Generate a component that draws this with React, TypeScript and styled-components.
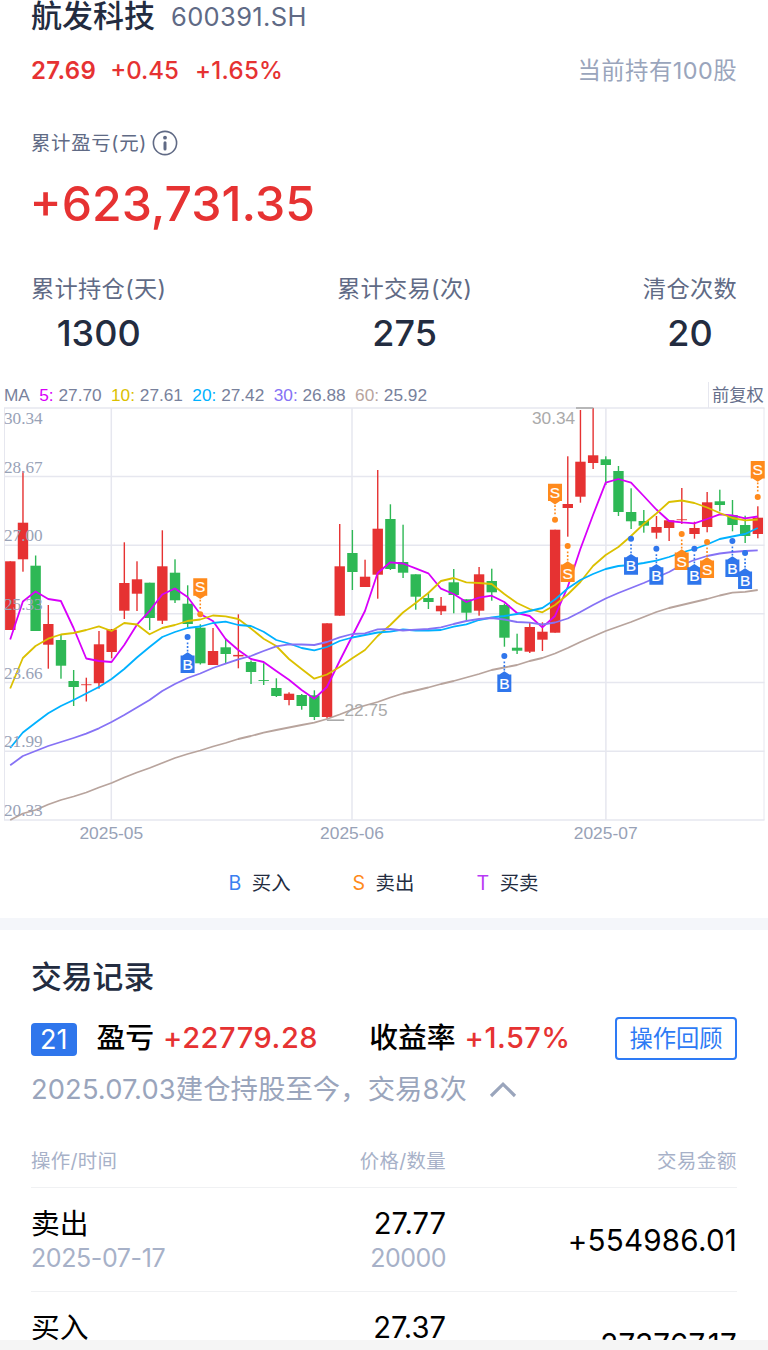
import React from "react";
import styled, { createGlobalStyle } from "styled-components";

const GlobalStyle = createGlobalStyle`
  * { box-sizing: border-box; }
  body {
    margin: 0;
    background: #fff;
    font-family: Inter, "Noto Sans CJK SC", sans-serif;
  }
`;

const RED = "#e63232";
const GREEN = "#2eb855";
const BLUE = "#2f76ec";
const ORANGE = "#ff8a1c";

const Page = styled.main`
  display: flex;
  flex-direction: column;
  width: 768px;
  height: 1350px;
  overflow: hidden;
  background: #fff;
`;

const Text = styled.span<{ $size: number; $color?: string; $weight?: number; $track?: number; $line?: number }>`
  font-size: ${(p) => p.$size}px;
  line-height: ${(p) => p.$line ?? 32}px;
  font-weight: ${(p) => p.$weight ?? 400};
  color: ${(p) => p.$color ?? "#000"};
  letter-spacing: ${(p) => p.$track ?? 0}px;
  white-space: nowrap;
`;

const Summary = styled.header`
  display: flex;
  flex-direction: column;
  height: 382px;
  padding: 0 31px;
  flex: none;
`;

const TitleRow = styled.div`
  display: flex;
  align-items: center;
  gap: 16px;
  height: 32px;
`;

const Code = styled(Text)`
  padding-top: 2px;
`;

const QuoteRow = styled.div`
  display: flex;
  align-items: center;
  height: 32px;
  margin-top: 23px;
`;

const Quote = styled.div`
  display: flex;
  flex: 1;
  gap: 14px;
`;

const Percent = styled(Text)`
  margin-left: 2px;
`;

const ProfitLabel = styled.div`
  display: flex;
  align-items: center;
  gap: 5px;
  height: 32px;
  margin-top: 40px;
`;

const Profit = styled.div`
  display: flex;
  align-items: center;
  height: 60px;
  margin: 15px 0 0 -1.5px;
`;

const Stats = styled.div`
  display: flex;
  justify-content: space-between;
  margin-top: 39px;
`;

const Stat = styled.div`
  display: flex;
  flex-direction: column;
  align-items: center;
`;

const ChartHead = styled.div`
  display: flex;
  height: 26px;
  flex: none;
  padding: 0 4px;
  justify-content: space-between;
  font-family: "Liberation Sans", "Noto Sans CJK SC", sans-serif;
  font-size: 17.25px;
  line-height: 27px;
  color: #78819c;
`;

const Averages = styled.div`
  display: flex;
  gap: 9.4px;
  white-space: pre;
`;

const AverageName = styled.span<{ $color: string }>`
  color: ${(p) => p.$color};
`;

const Adjust = styled.div`
  width: 56px;
  border-left: 1.5px solid #e6e7ef;
  padding-left: 3px;
  color: #66708c;
  white-space: nowrap;
`;

const Chart = styled.svg`
  display: block;
  flex: none;
  width: 768px;
  height: 442px;
`;

const Legend = styled.div`
  display: flex;
  flex: none;
  height: 68px;
  padding: 16.5px 0 0 228.5px;
  gap: 62px;
`;

const LegendItem = styled.div`
  display: flex;
  gap: 10.5px;
  width: 62px;
`;

const Divider = styled.div`
  height: 12px;
  flex: none;
  background: #f4f6fa;
`;

const Records = styled.section`
  display: flex;
  flex-direction: column;
  height: 410px;
  flex: none;
  overflow: hidden;
  padding: 0 31px;
`;

const Heading = styled.h2`
  display: flex;
  margin: 31px 0 0;
  height: 32px;
`;

const ResultRow = styled.div`
  display: flex;
  align-items: center;
  height: 43px;
  margin-top: 24px;
`;

const Badge = styled.div`
  display: flex;
  align-items: center;
  justify-content: center;
  width: 45.5px;
  height: 33px;
  margin-top: 2px;
  border-radius: 4px;
  background: ${BLUE};
`;

const Pair = styled.div<{ $left: number }>`
  display: flex;
  align-items: center;
  gap: 9px;
  margin-left: ${(p) => p.$left}px;
  padding-bottom: 2px;
`;

const ReviewButton = styled.button`
  display: flex;
  align-items: center;
  justify-content: center;
  width: 122px;
  height: 43px;
  margin-left: auto;
  padding: 1px 0 0;
  border: 2px solid #2e7bf5;
  border-radius: 4px;
  background: #fff;
  font-family: inherit;
`;

const NoteRow = styled.div`
  display: flex;
  align-items: center;
  gap: 22px;
  height: 32px;
  margin-top: 14px;
`;

const Columns = styled.div<{ $height: number; $top?: number }>`
  display: grid;
  grid-template-columns: 215px 200px 1fr;
  align-items: center;
  flex: none;
  height: ${(p) => p.$height}px;
  padding-top: ${(p) => p.$top ?? 0}px;
  border-bottom: 1px solid #f0f1f3;
`;

const Cell = styled.div<{ $end?: boolean }>`
  display: flex;
  flex-direction: column;
  align-items: ${(p) => (p.$end ? "flex-end" : "flex-start")};
`;

const BottomEdge = styled.div`
  height: 10px;
  flex: none;
  background: #f5f5f5;
`;

// Each candle: direction, body top, body bottom, wick top, wick bottom.
type Candle = ["r" | "g", number, number, number, number];
const candles: Candle[] = [
  ["r", 561.3, 630, 561.3, 630], ["r", 522.7, 559.3, 471, 571.7], ["g", 565.7, 631, 555.5, 631],
  ["r", 624, 644.7, 605, 668.7], ["g", 640, 665.7, 635, 678.7], ["g", 681, 687, 670, 706],
  ["r", 684.3, 685.2, 677.7, 701.5], ["r", 644.3, 683.2, 631, 688.7], ["r", 629.5, 652, 629, 658.3],
  ["r", 583, 610.7, 542.3, 619], ["r", 579.3, 593.7, 561.3, 611], ["g", 582.7, 618, 582.7, 630],
  ["r", 566.3, 620.7, 530.3, 624], ["g", 572.7, 600.3, 559.3, 603], ["g", 603.7, 624, 585.3, 627],
  ["g", 627.7, 663.3, 624.3, 664.5], ["r", 651, 665, 628, 665], ["g", 647.3, 654, 638.7, 663.3],
  ["r", 654.9, 656.4, 614.3, 668.3], ["g", 662, 672, 660.5, 684], ["g", 680, 680.9, 663.3, 685],
  ["g", 688, 696, 678.3, 697], ["r", 693.7, 700, 692.3, 705.3], ["g", 695, 706, 694, 709.7],
  ["g", 695.3, 717, 690.3, 720], ["r", 623.3, 717, 623.3, 718.7], ["r", 566.3, 615.7, 524, 615.7],
  ["g", 553, 572, 530, 590], ["r", 576.7, 587, 559.7, 587], ["r", 528.7, 574.7, 470, 598.7],
  ["g", 519, 569, 504.3, 570], ["g", 562, 572.7, 524.7, 578], ["g", 574.3, 596.7, 574.3, 609.7],
  ["g", 598, 602, 592.3, 609], ["r", 605.7, 611.3, 597, 615], ["g", 582.3, 595, 569, 613.3],
  ["g", 599.3, 612.7, 599.3, 620.7], ["r", 574.3, 610.7, 567, 615.7], ["g", 581, 592.3, 568.7, 600.7],
  ["g", 605, 637.7, 603.5, 646.7], ["g", 647.7, 650.7, 633.7, 654], ["r", 627, 651.7, 623, 653],
  ["r", 631.7, 639.7, 622.3, 651], ["r", 529.7, 632.7, 529.7, 632.7], ["r", 504, 508, 456.3, 536.7],
  ["r", 461.7, 496.7, 410, 502.7], ["r", 455.3, 463, 408, 469], ["g", 459.3, 465, 456.3, 485],
  ["g", 471, 512, 466, 516], ["g", 512, 521.3, 488.3, 529], ["g", 521, 525.7, 510, 532.7],
  ["r", 527, 532.7, 516, 538.7], ["r", 520.3, 528, 520.3, 541], ["r", 519.3, 520.2, 488, 524],
  ["r", 528, 534, 521.7, 538.7], ["r", 502.3, 527, 492, 532.3], ["g", 501.3, 505, 489.7, 511.3],
  ["g", 515, 525, 500, 531.3], ["g", 525, 536, 515.7, 543], ["r", 517.7, 534, 506.3, 538.3],
];

const averages = [
  {
    name: "60:", value: "25.92", color: "#b8a49d", width: 1.8,
    ys: [820, 813.5, 810, 804.5, 800, 796.5, 792.5, 787.5, 783, 777.5, 772.5, 768, 763, 758, 754, 750.5, 746.5, 743, 739, 736, 732.7, 730, 727.5, 725, 722.7, 719, 714.5, 709.5, 705.5, 702, 697.5, 693.5, 690.5, 687.5, 684, 681, 677.5, 674, 670, 667.5, 665, 661, 658, 653.5, 648, 642, 636.5, 631, 626.5, 622, 617, 612, 608, 605, 602, 599, 595.5, 592.7, 591.8, 590],
  },
  {
    name: "5:", value: "27.70", color: "#d800fa", width: 1.8,
    ys: [639.5, 601.5, 591.5, 599, 601, 628, 658.5, 661, 662, 645, 624.7, 611, 594.5, 588.5, 597, 614, 621, 639, 650, 659, 662, 671, 679.7, 690, 698.7, 687, 661, 636, 611, 573, 562.3, 563.5, 568.3, 573.3, 588.7, 594, 602, 597.7, 595.7, 602, 613, 616, 627.3, 616, 587, 549, 515, 482.7, 479, 482.7, 496, 509.5, 521, 522.3, 523.3, 519, 514.3, 515.3, 518.3, 516.5],
  },
  {
    name: "10:", value: "27.61", color: "#dbc000", width: 1.8,
    ys: [688.5, 658, 646, 638.7, 634.5, 633, 630, 626.3, 631, 623, 624.5, 634.3, 628, 625, 621, 619.5, 615.5, 616.3, 619, 628.5, 638.7, 646, 659, 669, 678.7, 674.5, 667, 658.3, 650, 636, 625, 612.5, 603, 593, 581, 578, 582.3, 583, 584, 594, 603, 609, 612.3, 605, 594.5, 582, 566, 555, 547, 536, 524, 513.5, 502, 500.5, 503, 507.5, 513, 518, 520.3, 519.5],
  },
  {
    name: "20:", value: "27.42", color: "#00b1ff", width: 1.8,
    ys: [748, 732.5, 722.7, 713.3, 706, 700, 693.5, 687, 679, 669, 657.5, 647, 637, 632, 628, 626.5, 623, 621.7, 625, 626, 631.7, 640, 643.5, 648, 650.3, 647, 641, 637.5, 635, 632.5, 631.7, 629.5, 630.5, 630.5, 630, 626.7, 624.3, 620, 617.5, 616, 614, 611, 608, 599.5, 588.5, 580, 574, 569, 566, 565, 563, 560.7, 557, 552.5, 549, 544.5, 539, 536.5, 534, 528],
  },
  {
    name: "30:", value: "26.88", color: "#8672f5", width: 1.8,
    ys: [765.3, 756, 751, 746, 742, 738, 733.7, 728.3, 722, 715, 707.5, 700, 691, 684, 678, 673.5, 668, 663.7, 659.3, 656, 651, 646.3, 644.3, 644.5, 645, 642, 637.3, 634, 633.3, 629.3, 629, 630.5, 629.7, 629, 627.3, 624, 621, 619, 618, 619.5, 622, 622.7, 624.5, 622.5, 618.5, 612, 605, 598.5, 593, 588, 583, 577.5, 572, 565, 560, 556, 553.5, 552, 551, 550.3],
  },
];

type Pin = { at: number; y: number; side: "B" | "S"; up?: boolean };
const pins: Pin[] = [
  { at: 14, y: 637, side: "B" },
  { at: 15, y: 614.3, side: "S", up: true },
  { at: 39, y: 656, side: "B" },
  { at: 43, y: 519.7, side: "S", up: true },
  { at: 44, y: 546, side: "S" },
  { at: 49, y: 538.7, side: "B" },
  { at: 51, y: 548.7, side: "B" },
  { at: 53, y: 534, side: "S" },
  { at: 54, y: 548.7, side: "B" },
  { at: 55, y: 542, side: "S" },
  { at: 57, y: 541, side: "B" },
  { at: 58, y: 553, side: "B" },
  { at: 59, y: 497, side: "S", up: true },
];

const px = (i: number) => 10.2 + i * 12.67;

const gridRows: [number, string, number][] = [
  [408, "30.34", 424], [476.5, "28.67", 473], [545.2, "27.00", 541.3], [613.8, "25.33", 610],
  [682.5, "23.66", 678.7], [751.2, "21.99", 747.3], [820, "20.33", 816],
];
const months: [number, string][] = [[111.3, "2025-05"], [352, "2025-06"], [605.7, "2025-07"]];

const byName = (n: string) => averages.find((a) => a.name === n)!;
const shown = ["5:", "10:", "20:", "30:", "60:"].map(byName);

function PinMark({ pin }: { pin: Pin }) {
  const color = pin.side === "B" ? BLUE : ORANGE;
  const d = pin.up ? -1 : 1;
  return (
    <g transform={`translate(${px(pin.at)} ${pin.y})`}>
      <circle r="3" fill={color} />
      <line x1="0" x2="0" y1={d * 5.5} y2={d * 15.5} stroke={color} strokeWidth="1.6" strokeDasharray="1.8 1.8" />
      <path
        d={`M0 ${d * 15.2} L5 ${d * 18.6} H7 V${d * 36} H-7 V${d * 18.6} H-5 Z`}
        fill={color}
      />
      <text
        x="0"
        y={d * 27.3 + 5.2}
        textAnchor="middle"
        fontSize="15.5"
        fill="#fff"
        stroke="#fff"
        strokeWidth="0.2"
        fontFamily="Liberation Sans, sans-serif"
      >
        {pin.side}
      </text>
    </g>
  );
}

function PriceChart() {
  return (
    <Chart viewBox="0 408 768 442" overflow="visible">
      <g stroke="#e6e7ef" strokeWidth="1.5">
        {gridRows.map(([y]) => (
          <line key={y} x1="4" x2="764.5" y1={y} y2={y} />
        ))}
        {[4.5, 111.3, 352, 605.9, 764].map((x, i) => (
          <line key={x} x1={x} x2={x} y1="408" y2="820" strokeWidth={i % 4 ? 1.5 : 1} />
        ))}
      </g>
      {candles.map(([dir, top, bottom, high, low], i) => {
        const color = dir === "r" ? RED : GREEN;
        return (
          <g key={i} fill={color}>
            <rect x={px(i) - 0.6} y={high} width="1.4" height={low - high} />
            <rect x={px(i) - 5.1} y={top} width="10.4" height={bottom - top} />
          </g>
        );
      })}
      {averages.map((a) => (
        <polyline
          key={a.name}
          points={a.ys.map((y, i) => `${px(i)},${y}`).join(" ")}
          fill="none"
          stroke={a.color}
          strokeWidth={a.width}
          strokeLinejoin="round"
        />
      ))}
      <g fill="#98a2b7" fontFamily="Liberation Serif, serif" fontSize="17.2">
        {gridRows.map(([, label, y]) => (
          <text key={label} x="4" y={y}>{label}</text>
        ))}
      </g>
      <g fill="#aaa" fontFamily="Liberation Sans, sans-serif" fontSize="17.25">
        <rect x="576" y="407.2" width="17.4" height="1.6" />
        <text x="532" y="424.4">30.34</text>
        <rect x="326.8" y="719.4" width="17.4" height="1.6" />
        <text x="344.5" y="716.4">22.75</text>
      </g>
      {pins.map((pin) => (
        <PinMark key={pin.at} pin={pin} />
      ))}
      <g fill="#98a2b7" fontFamily="Liberation Sans, sans-serif" fontSize="17.4" textAnchor="middle">
        {months.map(([x, label]) => (
          <text key={label} x={x} y="839">{label}</text>
        ))}
      </g>
    </Chart>
  );
}

const stats = [
  { label: "累计持仓(天)", value: "1300" },
  { label: "累计交易(次)", value: "275" },
  { label: "清仓次数", value: "20" },
];

const legend = [
  { mark: "B", label: "买入", color: "#3a7ff0" },
  { mark: "S", label: "卖出", color: ORANGE },
  { mark: "T", label: "买卖", color: "#b83af5" },
];

const trades = [
  { side: "卖出", date: "2025-07-17", price: "27.77", count: "20000", amount: "+554986.01" },
  { side: "买入", date: "2025-07-17", price: "27.37", count: "10000", amount: "-273767.17" },
];

export default function App() {
  return (
    <Page>
      <GlobalStyle />
      <Summary>
        <TitleRow>
          <Text $size={31} $weight={500} $color="#232c40">航发科技</Text>
          <Code $size={25.5} $color="#606a85" $track={0.35}>600391.SH</Code>
        </TitleRow>
        <QuoteRow>
          <Quote>
            <Text $size={24} $weight={600} $color={RED} $track={0.35}>27.69</Text>
            <Text $size={24} $weight={500} $color={RED}>+0.45</Text>
            <Percent $size={24} $weight={500} $color={RED} $track={0.3}>+1.65%</Percent>
          </Quote>
          <Text $size={23.4} $color="#9aa5bc" $track={0.45}>当前持有100股</Text>
        </QuoteRow>
        <ProfitLabel>
          <Text $size={19.4} $color="#606a85" $track={0.7}>累计盈亏(元)</Text>
          <svg width="26" height="26" viewBox="0 0 26 26" fill="none">
            <circle cx="13" cy="13" r="11.6" stroke="#606a85" strokeWidth="1.6" />
            <circle cx="13" cy="7.7" r="1.9" fill="#606a85" />
            <path d="M13 12.8V19" stroke="#606a85" strokeWidth="3" strokeLinecap="round" />
          </svg>
        </ProfitLabel>
        <Profit>
          <Text $size={48.2} $weight={500} $color={RED} $line={60}>+623,731.35</Text>
        </Profit>
        <Stats>
          {stats.map((s) => (
            <Stat key={s.label}>
              <Text $size={23.2} $color="#606a85" $track={0.35}>{s.label}</Text>
              <Text $size={36} $weight={500} $color="#232c40" $line={56}>{s.value}</Text>
            </Stat>
          ))}
        </Stats>
      </Summary>
      <ChartHead>
        <Averages>
          <span>MA</span>
          {shown.map((a) => (
            <span key={a.name}>
              <AverageName $color={a.color}>{a.name}</AverageName> {a.value}
            </span>
          ))}
        </Averages>
        <Adjust>前复权</Adjust>
      </ChartHead>
      <PriceChart />
      <Legend>
        {legend.map((l) => (
          <LegendItem key={l.mark}>
            <Text $size={19.6} $color={l.color}>{l.mark}</Text>
            <Text $size={19.4} $color="#232c40">{l.label}</Text>
          </LegendItem>
        ))}
      </Legend>
      <Divider />
      <Records>
        <Heading>
          <Text $size={30.8} $weight={500} $color="#232c40">交易记录</Text>
        </Heading>
        <ResultRow>
          <Badge>
            <Text $size={27} $color="#fff">21</Text>
          </Badge>
          <Pair $left={20}>
            <Text $size={28.8} $weight={500}>盈亏</Text>
            <Text $size={29} $weight={500} $color={RED} $track={0.55}>+22779.28</Text>
          </Pair>
          <Pair $left={51}>
            <Text $size={28.8} $weight={500}>收益率</Text>
            <Text $size={29} $weight={500} $color={RED} $track={0.5}>+1.57%</Text>
          </Pair>
          <ReviewButton>
            <Text $size={23.3} $color="#2e7bf5">操作回顾</Text>
          </ReviewButton>
        </ResultRow>
        <NoteRow>
          <Text $size={27.3} $color="#9aa5bc" $track={0.12}>2025.07.03建仓持股至今，交易8次</Text>
          <svg width="28" height="18" viewBox="0 0 28 18" fill="none">
            <path d="M2 15L14 3.2L26 15" stroke="#9aa5bc" strokeWidth="3.2" />
          </svg>
        </NoteRow>
        <Columns $height={82} $top={28}>
          <Cell><Text $size={19.4} $color="#a7b1c8" $track={0.35}>操作/时间</Text></Cell>
          <Cell $end><Text $size={19.4} $color="#a7b1c8" $track={0.35}>价格/数量</Text></Cell>
          <Cell $end><Text $size={19.4} $color="#a7b1c8" $track={0.6}>交易金额</Text></Cell>
        </Columns>
        {trades.map((t) => (
          <Columns key={t.side} $height={104}>
            <Cell>
              <Text $size={28.8} $line={36}>{t.side}</Text>
              <Text $size={25} $color="#a7b1c8" $track={-0.4}>{t.date}</Text>
            </Cell>
            <Cell $end>
              <Text $size={29.2} $line={36}>{t.price}</Text>
              <Text $size={25} $color="#a7b1c8" $track={-0.5}>{t.count}</Text>
            </Cell>
            <Cell $end>
              <Text $size={29.6} $track={0.2}>{t.amount}</Text>
            </Cell>
          </Columns>
        ))}
      </Records>
      <BottomEdge />
    </Page>
  );
}
